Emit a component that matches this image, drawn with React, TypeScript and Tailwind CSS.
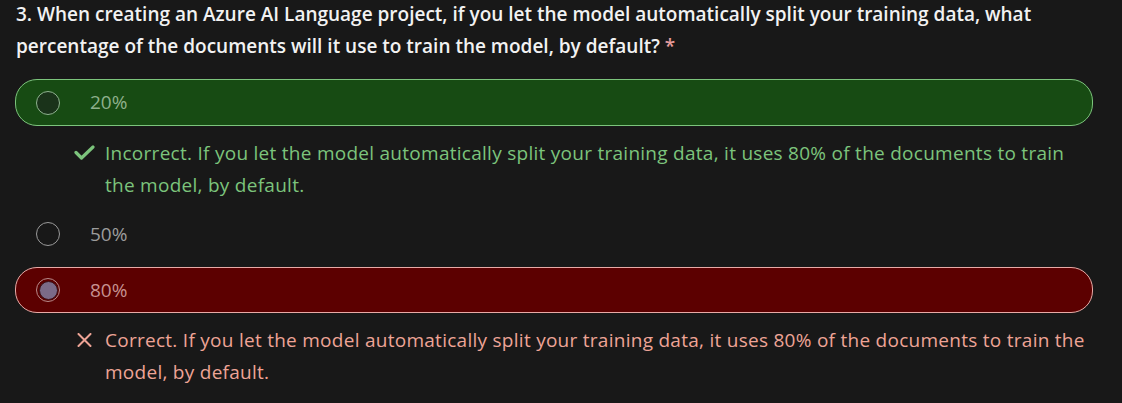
const CheckIcon = () => (
  <svg width="21" height="15" viewBox="0 0 21 15" fill="none" className="shrink-0">
    <path d="M2 7.5 L7.5 13 L19 2" stroke="#7cc47c" strokeWidth="3.2" strokeLinecap="round" strokeLinejoin="round" />
  </svg>
)

const CrossIcon = () => (
  <svg width="15" height="14" viewBox="0 0 15 14" fill="none" className="shrink-0">
    <path d="M1.5 1 L13.5 13 M13.5 1 L1.5 13" stroke="#eea496" strokeWidth="2" strokeLinecap="round" />
  </svg>
)

const App = () => {
  return (
    <div className="min-h-[403px] w-[1122px] bg-[#181818] font-['Open_Sans',sans-serif] overflow-hidden">
      <div className="pl-4 -mt-[2px]">
        <h3 className="text-[19px] leading-8 font-semibold text-[#f2f2f2] whitespace-nowrap">
          3. When creating an Azure AI Language project, if you let the model automatically split your training data, what
          <br />
          percentage of the documents will it use to train the model, by default? <span className="text-[#e59c9c]">*</span>
        </h3>
      </div>

      <div className="ml-[15px] w-[1078px] mt-[17px] flex flex-col">
        {/* 20% */}
        <div className="h-[47px] rounded-[22px] border border-[#7cc47c] bg-[#174b13] flex items-center pl-[20px]">
          <span className="w-6 h-6 rounded-full border-[1.5px] border-[#8fb38f] bg-[#1a331a]" />
          <span className="ml-[30px] text-[19px] text-[#8fb08c]">20%</span>
        </div>
        <div className="mt-[11px] flex items-start pl-[59px]">
          <div className="w-[31px] pt-[8px]"><CheckIcon /></div>
          <p className="text-[19px] leading-8 tracking-[0.27px] text-[#7cc47c] whitespace-nowrap">
            Incorrect. If you let the model automatically split your training data, it uses 80% of the documents to train
            <br />
            the model, by default.
          </p>
        </div>

        {/* 50% */}
        <div className="mt-[10px] h-[46px] rounded-[22px] border border-transparent flex items-center pl-[20px]">
          <span className="w-6 h-6 rounded-full border-[1.5px] border-[#9a9a9a]" />
          <span className="ml-[30px] text-[19px] text-[#9c9c9c]">50%</span>
        </div>

        {/* 80% */}
        <div className="mt-[10px] h-[46px] rounded-[22px] border border-[#e8aaa6] bg-[#5c0000] flex items-center pl-[20px]">
          <span className="w-6 h-6 rounded-full border border-[#b88a8a] p-[1.5px] flex">
            <span className="flex-1 rounded-full border-[1.5px] border-[#3a1016] bg-[#7b6b88]" />
          </span>
          <span className="ml-[30px] text-[19px] text-[#c69190]">80%</span>
        </div>
        <div className="mt-[11px] flex items-start pl-[62px]">
          <div className="w-[28px] pt-[9px]"><CrossIcon /></div>
          <p className="text-[19px] leading-8 tracking-[0.27px] text-[#eea496] whitespace-nowrap">
            Correct. If you let the model automatically split your training data, it uses 80% of the documents to train the
            <br />
            model, by default.
          </p>
        </div>
      </div>
    </div>
  )
}

export default App
